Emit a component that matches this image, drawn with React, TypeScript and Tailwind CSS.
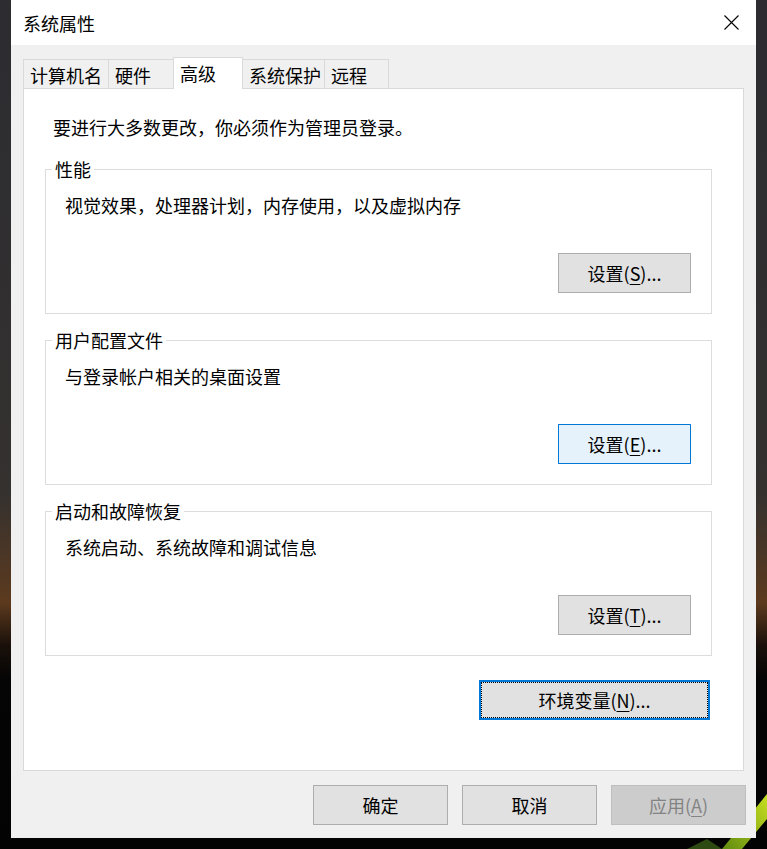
import React from 'react';

const FONT = { fontFamily: '"Noto Sans CJK SC", "Microsoft YaHei", sans-serif' };

interface TabDef {
  label: string;
  width: string;
  active?: boolean;
}

const TABS: TabDef[] = [
  { label: '计算机名', width: 'w-[86px]' },
  { label: '硬件', width: 'w-[66px]' },
  { label: '高级', width: 'w-[70px]', active: true },
  { label: '系统保护', width: 'w-[83px]' },
  { label: '远程', width: 'w-[65px]' },
];

const Mnemonic: React.FC<{ text: string; keyChar: string }> = ({ text, keyChar }) => (
  <span>
    {text}(<span className="underline underline-offset-[3px] decoration-1">{keyChar}</span>)...
  </span>
);

const WinButton: React.FC<{ children: React.ReactNode; hover?: boolean; className?: string }> = ({ children, hover, className = '' }) => (
  <button
    className={`h-[40px] w-[133px] border text-[18px] leading-none text-black flex items-center justify-center ${
      hover ? 'border-[#0078d7] bg-[#e5f1fb]' : 'border-[#adadad] bg-[#e1e1e1]'
    } ${className}`}
  >
    {children}
  </button>
);

const Group: React.FC<{ title: string; desc: string; button: React.ReactNode; hover?: boolean; className?: string }> = ({ title, desc, button, hover, className = '' }) => (
  <fieldset className={`border border-[#dcdcdc] px-0 pt-0 pb-[20px] m-0 ${className}`}>
    <legend className="ml-[6px] px-[3px] text-[18px] leading-[20px]">{title}</legend>
    <div className="pl-[19px] pt-[14px] text-[18px] leading-[24px]">{desc}</div>
    <div className="flex justify-end pr-[20px] mt-[36px]">
      <WinButton hover={hover}>{button}</WinButton>
    </div>
  </fieldset>
);

export default function App() {
  return (
    <div
      className="relative w-[767px] h-[849px] overflow-hidden px-[11px] pb-[11px] bg-[linear-gradient(to_bottom,#2c2c31_0%,#34312f_58%,#5c3a1e_71%,#1a100a_76%,#050505_80%,#030303_100%)]"
      style={FONT}
    >
      <svg className="absolute right-0 bottom-0" width="120" height="80" viewBox="0 0 120 80">
        <defs>
          <linearGradient id="leaf" x1="0" y1="1" x2="1" y2="0">
            <stop offset="0" stopColor="#5f8a10" />
            <stop offset="1" stopColor="#c8e020" />
          </linearGradient>
        </defs>
        <polygon points="75,80 120,25 120,50 95,80" fill="url(#leaf)" />
        <polygon points="40,80 60,70 75,80" fill="#2d4a12" />
      </svg>

      <div className="relative z-10 w-[745px] h-[838px] flex flex-col bg-[#f0f0f0] text-black">
        {/* title bar */}
        <div className="h-[45px] bg-white flex items-center justify-between pl-[12px] pr-[17px]">
          <span className="text-[18px] leading-none">系统属性</span>
          <svg width="15" height="15" viewBox="0 0 15 15">
            <path d="M0.5 0.5 L14.5 14.5 M14.5 0.5 L0.5 14.5" stroke="#000" strokeWidth="1.1" />
          </svg>
        </div>

        <div className="flex-1 flex flex-col px-[12px] pt-[12px]">
          {/* tabs */}
          <div className="flex items-end h-[31px]">
            {TABS.map((t, i) => (
              <div
                key={t.label}
                className={`${t.width} ${i > 0 ? '-ml-px' : ''} border-t border-l border-r border-[#d9d9d9] text-[18px] leading-none flex items-center pl-[6px] ${
                  t.active ? 'relative z-10 h-[32px] -mb-px bg-white pb-[2px]' : 'h-[29px] bg-[#f0f0f0] pt-[2px]'
                }`}
              >
                {t.label}
              </div>
            ))}
          </div>

          {/* panel */}
          <div className="h-[683px] bg-white border border-[#d9d9d9] pl-[21px] pr-[31px] pt-[26px] flex flex-col">
            <div className="ml-[8px] text-[18px] leading-[24px]">要进行大多数更改，你必须作为管理员登录。</div>

            <Group className="mt-[20px]" title="性能" desc="视觉效果，处理器计划，内存使用，以及虚拟内存" button={<Mnemonic text="设置" keyChar="S" />} />
            <Group className="mt-[16px]" title="用户配置文件" desc="与登录帐户相关的桌面设置" hover button={<Mnemonic text="设置" keyChar="E" />} />
            <Group className="mt-[16px]" title="启动和故障恢复" desc="系统启动、系统故障和调试信息" button={<Mnemonic text="设置" keyChar="T" />} />

            <div className="flex justify-end mt-[24px] pr-[2px]">
              <button className="h-[40px] w-[231px] border-2 border-[#0078d7] bg-[#e1e1e1] text-[18px] leading-none flex items-center justify-center outline-1 outline-dotted outline-black -outline-offset-3">
                <Mnemonic text="环境变量" keyChar="N" />
              </button>
            </div>
          </div>

          {/* dialog buttons */}
          <div className="flex justify-end gap-[14px] pt-[14px] -mr-[2px]">
            <WinButton className="w-[135px]">确定</WinButton>
            <WinButton className="w-[135px]">取消</WinButton>
            <button className="h-[40px] w-[135px] border border-[#bfbfbf] bg-[#cccccc] text-[18px] leading-none text-[#838383] flex items-center justify-center">
              <span>
                应用(<span className="underline underline-offset-[3px] decoration-1">A</span>)
              </span>
            </button>
          </div>
        </div>
      </div>
    </div>
  );
}
